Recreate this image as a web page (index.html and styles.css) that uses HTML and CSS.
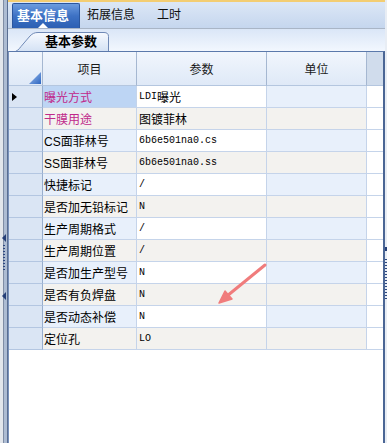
FILE: index.html
```html
<!DOCTYPE html>
<html lang="zh-CN">
<head>
    <meta charset="UTF-8">
    <title>基本信息</title>
    <link rel="stylesheet" href="styles.css">
</head>
<body>
<div class="window">
    <div class="splitter-left">
        <span class="split-arrow-left"></span>
        <span class="split-dots"></span>
        <span class="split-arrow-left second"></span>
    </div>

    <div class="main">
        <div class="tabbar">
            <div class="tab tab-active">基本信息</div>
            <div class="tab tab-second">拓展信息</div>
            <div class="tab">工时</div>
        </div>

        <div class="subbar">
            <div class="subtab">
                <svg class="subtab-shape" width="97" height="20" viewBox="0 0 97 20">
                    <defs>
                        <linearGradient id="subtabFill" x1="0" y1="0" x2="0" y2="1">
                            <stop offset="0" stop-color="#f7faff"/>
                            <stop offset="1" stop-color="#d3e1f4"/>
                        </linearGradient>
                    </defs>
                    <path d="M0.5,20 C5,20 7,17 9,14.5 L18,4 C20.5,1.5 22.5,0.5 26,0.5 L92,0.5 Q96.5,0.5 96.5,4.5 L96.5,20"
                          fill="url(#subtabFill)" stroke="#6f89b6" stroke-width="1"/>
                </svg>
                <span class="subtab-label">基本参数</span>
            </div>
        </div>

        <div class="grid-wrap">
            <div class="grid-head">
                <div class="hcell corner"><span class="corner-tri"></span></div>
                <div class="hcell">项目</div>
                <div class="hcell">参数</div>
                <div class="hcell">单位</div>
                <div class="hcell filler"></div>
            </div>

            <div class="grid-row odd">
                <div class="rh"><span class="cur-mark"></span></div>
                <div class="cell name selected flag">曝光方式</div>
                <div class="cell val"><span class="mono">LDI</span>曝光</div>
                <div class="cell unit"></div>
                <div class="cell fill"></div>
            </div>
            <div class="grid-row even">
                <div class="rh"></div>
                <div class="cell name flag">干膜用途</div>
                <div class="cell val">图镀菲林</div>
                <div class="cell unit"></div>
                <div class="cell fill"></div>
            </div>
            <div class="grid-row odd">
                <div class="rh"></div>
                <div class="cell name">CS面菲林号</div>
                <div class="cell val mono">6b6e501na0.cs</div>
                <div class="cell unit"></div>
                <div class="cell fill"></div>
            </div>
            <div class="grid-row even">
                <div class="rh"></div>
                <div class="cell name">SS面菲林号</div>
                <div class="cell val mono">6b6e501na0.ss</div>
                <div class="cell unit"></div>
                <div class="cell fill"></div>
            </div>
            <div class="grid-row odd">
                <div class="rh"></div>
                <div class="cell name">快捷标记</div>
                <div class="cell val mono">/</div>
                <div class="cell unit"></div>
                <div class="cell fill"></div>
            </div>
            <div class="grid-row even">
                <div class="rh"></div>
                <div class="cell name">是否加无铅标记</div>
                <div class="cell val mono">N</div>
                <div class="cell unit"></div>
                <div class="cell fill"></div>
            </div>
            <div class="grid-row odd">
                <div class="rh"></div>
                <div class="cell name">生产周期格式</div>
                <div class="cell val mono">/</div>
                <div class="cell unit"></div>
                <div class="cell fill"></div>
            </div>
            <div class="grid-row even">
                <div class="rh"></div>
                <div class="cell name">生产周期位置</div>
                <div class="cell val mono">/</div>
                <div class="cell unit"></div>
                <div class="cell fill"></div>
            </div>
            <div class="grid-row odd">
                <div class="rh"></div>
                <div class="cell name">是否加生产型号</div>
                <div class="cell val mono">N</div>
                <div class="cell unit"></div>
                <div class="cell fill"></div>
            </div>
            <div class="grid-row even">
                <div class="rh"></div>
                <div class="cell name">是否有负焊盘</div>
                <div class="cell val mono">N</div>
                <div class="cell unit"></div>
                <div class="cell fill"></div>
            </div>
            <div class="grid-row odd">
                <div class="rh"></div>
                <div class="cell name">是否动态补偿</div>
                <div class="cell val mono">N</div>
                <div class="cell unit"></div>
                <div class="cell fill"></div>
            </div>
            <div class="grid-row even">
                <div class="rh"></div>
                <div class="cell name">定位孔</div>
                <div class="cell val mono">LO</div>
                <div class="cell unit"></div>
                <div class="cell fill"></div>
            </div>

            <!-- red annotation arrow drawn over the grid -->
            <svg class="mark-arrow" width="374" height="391" viewBox="0 0 374 391">
                <line x1="256" y1="213" x2="218" y2="244" stroke="#f07c7c" stroke-width="3" stroke-linecap="round"/>
                <polygon points="210,251 216,239 223,247" fill="#f07c7c" stroke="#f07c7c" stroke-width="1.5" stroke-linejoin="round"/>
            </svg>
        </div>
    </div>

    <div class="splitter-right">
        <span class="split-arrow-right"></span>
        <span class="split-dots"></span>
    </div>
</div>
</body>
</html>
```

FILE: styles.css
```css
* {
    box-sizing: border-box;
}

body {
    margin: 0;
    font-family: "Liberation Sans", "Noto Sans CJK SC", sans-serif;
    font-size: 12px;
    color: #000;
    background: #fff;
}

.window {
    display: flex;
    width: 387px;
    height: 443px;
    overflow: hidden;
}

/* left splitter bar */
.splitter-left {
    width: 8px;
    flex: none;
    display: flex;
    flex-direction: column;
    align-items: flex-start;
    padding-top: 234px;
    padding-left: 2px;
    background: linear-gradient(to right,
        #e2e6ec 0, #e2e6ec 3px,
        #7f8da5 3px, #7f8da5 4px,
        #adbcd3 4px, #adbcd3 7px,
        #5a6e92 7px);
}

.split-arrow-left {
    width: 0;
    height: 0;
    border-top: 4px solid transparent;
    border-bottom: 4px solid transparent;
    border-right: 4px solid #253f78;
}

.split-arrow-left.second {
    margin-top: 20px;
}

.split-dots {
    width: 2px;
    height: 27px;
    margin-top: 3px;
    margin-left: 1px;
    background: repeating-linear-gradient(to bottom, #2c4780 0, #2c4780 1px, transparent 1px, transparent 3px);
}

.splitter-right {
    width: 2px;
    flex: none;
    display: flex;
    flex-direction: column;
    padding-top: 247px;
    background: #e8edf4;
}

.split-arrow-right {
    width: 2px;
    height: 4px;
    background: #253f78;
}

.splitter-right .split-dots {
    margin-left: 0;
    margin-top: 8px;
    height: 40px;
}

.main {
    flex: 1;
    min-width: 0;
    display: flex;
    flex-direction: column;
}

/* top tabs */
.tabbar {
    height: 29px;
    flex: none;
    display: flex;
    align-items: flex-end;
    padding-left: 4px;
    border-top: 2px solid #f3cd72;
    border-bottom: 1px solid #a9b5c6;
    background: linear-gradient(to bottom, #dce7f6, #c5d6ee);
}

.tab {
    height: 25px;
    line-height: 25px;
    padding: 0 11px;
    font-size: 12px;
    color: #101010;
}

.tab-second {
    padding-left: 7px;
}

.tab-active {
    position: relative;
    padding: 0 10px 0 4px;
    font-size: 13px;
    font-weight: bold;
    color: #fff;
    background: linear-gradient(to bottom, #6c9cdf, #3d71c4 50%, #2c5fb3);
    border: 1px solid #2a569e;
    border-bottom: none;
    border-radius: 2px 2px 0 0;
    line-height: 23px;
}

.tab-active::after {
    content: "";
    position: absolute;
    left: 25px;
    bottom: 0;
    border-left: 5px solid transparent;
    border-right: 5px solid transparent;
    border-bottom: 5px solid #fff;
}

/* sub tab strip */
.subbar {
    height: 22px;
    flex: none;
    padding: 3px 0 0 4px;
    background: linear-gradient(to bottom, #dae6f7, #f2f7fe);
}

.subtab {
    position: relative;
    width: 97px;
    height: 19px;
    padding-left: 33px;
}

.subtab-shape {
    position: absolute;
    left: 0;
    top: 0;
}

.subtab-label {
    position: relative;
    font-size: 13px;
    font-weight: bold;
    line-height: 20px;
    color: #000;
}

/* data grid */
.grid-wrap {
    position: relative;
    flex: 1;
    background: #fff;
    border-top: 1px solid #5b79ab;
    border-left: 1px solid #7891bb;
    border-right: 2px solid #4b6695;
}

.grid-head,
.grid-row {
    display: grid;
    grid-template-columns: 34px 94px 130px 100px 16px;
}

.grid-head {
    height: 34px;
}

.hcell {
    display: flex;
    align-items: center;
    justify-content: center;
    font-size: 12px;
    color: #1a1a1a;
    background: linear-gradient(to bottom, #f1f6fd, #dfe9f7);
    border-right: 1px solid #a5b7d1;
    border-bottom: 1px solid #b4c6df;
}

.hcell.corner {
    align-items: flex-end;
    justify-content: flex-end;
    padding: 0 1px 1px 0;
}

.corner-tri {
    width: 12px;
    height: 12px;
    background: linear-gradient(135deg, #9fc0ee, #2e66c1);
    clip-path: polygon(100% 0, 100% 100%, 0 100%);
}

.hcell.filler {
    background: #d0dcec;
    border-right: none;
}

.grid-row {
    height: 22px;
}

.rh,
.cell {
    display: flex;
    align-items: center;
    border-right: 1px solid #c5d4ea;
    border-bottom: 1px solid #c5d4ea;
    white-space: nowrap;
    overflow: hidden;
}

.rh {
    background: #dae5f4;
    border-right-color: #98aecd;
    border-bottom-color: #b3c6e1;
    padding-left: 3px;
}

.cur-mark {
    width: 0;
    height: 0;
    border-top: 4px solid transparent;
    border-bottom: 4px solid transparent;
    border-left: 5px solid #000;
}

.cell.name {
    padding-left: 1px;
}

.cell.val {
    padding-left: 2px;
}

.cell.fill {
    border-right: none;
    background: #fff;
}

.odd .name,
.odd .unit {
    background: #e8f0fb;
}

.odd .val {
    background: #fff;
}

.even .name,
.even .val,
.even .unit {
    background: #f3f2ef;
}

.cell.name.selected {
    background: #bdd5f4;
}

.flag {
    color: #c0288a;
}

.mono {
    font-family: "Liberation Mono", monospace;
    font-size: 10px;
}

.mark-arrow {
    position: absolute;
    left: 0;
    top: 0;
    pointer-events: none;
}
```
